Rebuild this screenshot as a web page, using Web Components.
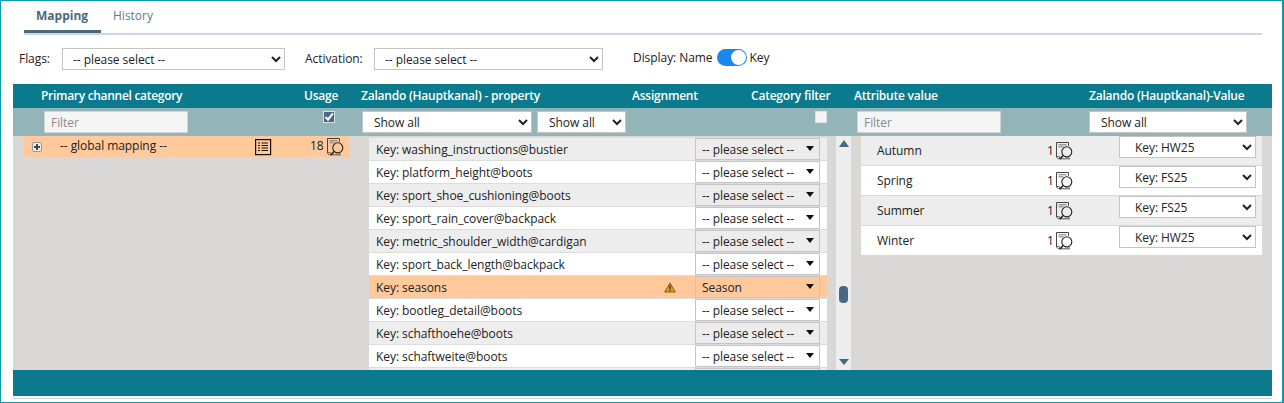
<!DOCTYPE html>
<html lang="en"><head><meta charset="utf-8"><title>Mapping</title>
<style>
html,body{margin:0;padding:0;background:#fff}
body{font:12px/16px "Open Sans","Noto Sans",sans-serif;color:#222;letter-spacing:-.06px}
</style></head><body>
<x-app>
  <x-tabs slot="tabs"></x-tabs>
  <x-toolbar slot="toolbar"></x-toolbar>
  <x-mapping slot="table"></x-mapping>
</x-app>
<script>
function def(name, css, html, init){
  customElements.define(name, class extends HTMLElement{
    connectedCallback(){
      if(this.shadowRoot) return;
      const r=this.attachShadow({mode:'open'});
      r.innerHTML='<style>'+css+'</style>'+(typeof html==='function'?html(this):html);
      if(init) init(r,this);
    }
  });
}
const att=(e,n,d='')=>e.hasAttribute(n)?e.getAttribute(n):d;

def('x-app',`:host{display:block;width:1284px;height:403px;box-sizing:border-box;border:1px solid #0a9aa8;border-width:1px 2px 1px 1px;overflow:hidden;background:#fff}
.w{display:flex;flex-direction:column;height:100%;padding:0 0 0 12px;box-sizing:border-box}
.rule{height:1px;background:#cdd6e2;margin-top:2px;width:1259px}`,
`<div class="w"><slot name="tabs"></slot><slot name="toolbar"></slot><slot name="table"></slot><div class="rule"></div></div>`);

def('x-tabs',`:host{display:flex;margin-left:11px;width:1238px;height:34px;box-sizing:border-box;border-bottom:2px solid #cdd6e2;align-items:stretch;letter-spacing:0}
a{display:block;box-sizing:border-box;height:33px;padding:7px 12px 0 12px;font-size:12px;line-height:16px;color:#5d7b8e;margin-bottom:-1px}
a.on{width:77px;font-weight:700;color:#49697f;border-bottom:3px solid #49697f;margin-bottom:0;height:32px}
`,`<a class="on">Mapping</a><a>History</a>`);

def('x-toolbar',`:host{display:flex;align-items:center;height:49px;box-sizing:border-box;padding:13px 0 14px 6px;font-size:12px}
.l{white-space:nowrap}
.f{width:43px;flex:none}.a{width:69px;flex:none;margin-left:20px}
.d{margin-left:30px;display:flex;align-items:center;margin-top:-3px}
.t{width:30px;height:17px;border-radius:9px;background:#1a86f0;margin:0 3px 0 4px;display:flex;justify-content:flex-end;align-items:center;padding-right:1px;box-sizing:border-box}
.t i{display:block;width:15px;height:15px;border-radius:50%;background:#fff}`,
`<span class="l f">Flags:</span><x-select w="223" pad="6" value="-- please select --"></x-select>
<span class="l a">Activation:</span><x-select w="229" pad="6" value="-- please select --"></x-select>
<div class="d"><span class="l">Display: Name</span><span class="t" role="switch" aria-checked="true"><i></i></span><span class="l">Key</span></div>`);

def('x-select',`:host{display:block;flex:none}
select{display:block;box-sizing:border-box;margin:0;font:inherit;letter-spacing:inherit;color:#222;background:#fff;border:1px solid #c4c4c4;border-radius:0;height:22px;padding:0 7px;outline:0;width:100%}
.tri{position:relative;display:block;height:22px}
.tri select{appearance:none;-webkit-appearance:none;padding:1px 0 0 6px}
.tri b{position:absolute;right:6px;top:8px;width:0;height:0;border:4px solid transparent;border-top:5px solid #111;border-bottom:0;pointer-events:none}
:host([tone=grey]) select{background:#ececec}
:host([tone=hl]) select{background:#ffc99b}`,
e=>{const s=`<select style="padding-left:${att(e,'pad',7)}px"><option selected>${att(e,'value')}</option></select>`;
 return att(e,'kind')==='tri'?`<span class="tri">${s.replace(/ style="[^"]*"/,'')}<b></b></span>`:s},
(r,e)=>{e.style.width=att(e,'w')+'px'});

def('x-filter',`:host{display:block;flex:none}
input{display:block;box-sizing:border-box;width:100%;height:22px;margin:0;border:1px solid #cfd3d3;background:#f5f5f5;padding:0 6px;font:inherit;letter-spacing:inherit;color:#222;outline:0}
input::placeholder{color:#8a8a8a;opacity:1}`,`<input placeholder="Filter">`,(r,e)=>{e.style.width=att(e,'w')+'px'});

def('x-check',`:host{display:block;flex:none;width:12px;height:12px;box-sizing:border-box;border:1px solid #d9e2e4;background:#f4f4f4}
:host([on]){background:#466a83}
svg{display:block}`,e=>e.hasAttribute('on')?`<svg width="10" height="10" viewBox="0 0 10 10"><path d="M1.5 5 L4 7.6 L8.8 1.4" fill="none" stroke="#fff" stroke-width="2"/></svg>`:'');

def('x-docsearch',`:host{display:block;flex:none;width:17px;height:18px}svg{display:block}`,
`<svg width="17" height="18" viewBox="0 0 17 18" fill="none">
<path d="M12.500 3.800V.5H.5V15l2.500 2.500" stroke="#444"/><path d="M2.500 2.800h8M2.500 4.800h5" stroke="#777"/>
<path d="M.8 14.500h2.700v2.500" stroke="#777"/><path d="M3.500 16.800h10.500" stroke="#555"/><path d="M9 15.300h5" stroke="#999"/>
<circle cx="10.800" cy="9.800" r="5" stroke="#222" stroke-width="1.100"/><path d="M7.200 13.500 3.800 17" stroke-width="1.600" stroke="#222"/></svg>`);

def('x-listicon',`:host{display:block;flex:none;width:17px;height:17px}svg{display:block}`,
`<svg width="17" height="17" viewBox="0 0 17 17" fill="none" stroke="#111"><rect x=".6" y=".6" width="15" height="15" stroke-width="1.200"/><path d="M3 4h2M6.500 4H13M3 6.500h2M6.500 6.500H13M3 9h2M6.500 9H13M3 11.500h2M6.500 11.500H13" stroke-width="1"/></svg>`);

def('x-tree-row',`:host{display:flex;align-items:center;height:21px;background:#ffc99b;box-sizing:border-box;padding:0 5px 0 9px;font-size:12px}
.p{width:10px;height:10px;flex:none;box-sizing:border-box;border:1px solid #9a9a9a;border-radius:2px;background:#e9e9e9;position:relative;margin-right:18px}
.p:before{content:"";position:absolute;left:1px;right:1px;top:3px;height:2px;background:#444}
.p:after{content:"";position:absolute;top:1px;bottom:1px;left:3px;width:2px;background:#444}
.t{width:195px;flex:none;margin-top:-2px}.n{margin-left:38px;margin-right:3px;width:14px;flex:none;margin-top:-2px}
x-listicon{margin-top:1px}`,
`<span class="p"></span><span class="t">-- global mapping --</span><x-listicon></x-listicon><span class="n">18</span><x-docsearch></x-docsearch>`);

def('x-prop-row',`:host{display:flex;height:23px;box-sizing:border-box;border-top:1px solid #dcdcdc;background:#fff;align-items:flex-start;padding-left:7px;font-size:12px;flex:none}
:host([alt]){background:#ededed}
:host([hl]){background:#ffc99b}
.t{flex:1;line-height:23px;white-space:nowrap;min-width:0}
.w{flex:none;width:12px;height:11px;margin:6px 19px 0 0}
x-select{margin-right:7px}
svg{display:block}`,
e=>`<span class="t"><slot></slot></span>${e.hasAttribute('warn')?`<span class="w"><svg width="12" height="11" viewBox="0 0 12 11"><path d="M6 1 11.300 10H.7Z" fill="#f7941d" stroke="#8a5a10" stroke-width="1"/><path d="M6 3.500v3.500M6 7.800v1.200" stroke="#222" stroke-width="1.200"/></svg></span>`:''}
<x-select kind="tri" w="125" value="${att(e,'value','-- please select --')}" tone="${e.hasAttribute('hl')?'hl':e.hasAttribute('alt')?'grey':''}"></x-select>`);

def('x-value-row',`:host{display:flex;height:29px;margin-bottom:1px;background:#fff;padding:0 6px 0 16px;font-size:12px;flex:none;align-items:flex-start}
:host([alt]){background:#ededed}
.t{width:170px;line-height:28px;margin-top:1px}
.n{width:9px;line-height:28px;margin-top:1px}
x-docsearch{margin-top:6px}
x-select{margin:0 0 0 46px}`,
e=>`<span class="t"><slot></slot></span><span class="n">1</span><x-docsearch></x-docsearch><x-select w="137" pad="11" value="${att(e,'value')}"></x-select>`);

def('x-scroll',`:host{display:flex;flex-direction:column;align-items:center;width:15px;background:#ededed;flex:none;box-sizing:border-box;padding-top:4px}
.u,.d{width:0;height:0;border:5px solid transparent}
.u{border-bottom:7px solid #466a83;border-top:0}
.d{border-top:6px solid #466a83;border-bottom:0}
.th{width:9px;height:17px;border-radius:4px;background:#466a83;margin:139px 0 56px}`,
`<i class="u"></i><i class="th"></i><i class="d"></i>`);

def('x-mapping',`:host{display:block;width:1259px;flex:none;font-size:12px}
.h{display:flex;height:24px;background:#0a7a8c;color:#fff;font-weight:600;line-height:24px;white-space:nowrap;letter-spacing:-.22px}
.h span{display:block;flex:none}
.fr{display:flex;height:28px;background:#93b5ba;padding-top:3px;box-sizing:border-box;align-items:flex-start}
.b{display:flex;height:234px;background:#d9d8d6;overflow:hidden}
.left{width:326px;margin-left:10px;flex:none}
.mid{width:458px;margin-left:20px;flex:none;height:234px;overflow:hidden;padding-top:1px;box-sizing:border-box;display:flex;flex-direction:column}
x-scroll{margin-left:9px}
.right{width:401px;margin-left:10px;flex:none;display:flex;flex-direction:column}
.foot{height:26px;background:#0a7a8c}`,
`<div class="h" role="row">
<span style="margin-left:28px;width:263px;letter-spacing:-.3px">Primary channel category</span><span style="width:57px">Usage</span><span style="width:271px">Zalando (Hauptkanal) - property</span><span style="width:119px">Assignment</span><span style="width:103px">Category filter</span><span style="width:235px">Attribute value</span><span>Zalando (Hauptkanal)-Value</span></div>
<div class="fr">
<x-filter w="144" style="margin-left:31px"></x-filter><x-check on style="margin-left:135px"></x-check>
<x-select w="170" value="Show all" style="margin-left:27px"></x-select><x-select w="89" value="Show all" style="margin-left:5px"></x-select>
<x-check style="margin-left:189px"></x-check><x-filter w="144" style="margin-left:30px"></x-filter><x-select w="158" value="Show all" style="margin-left:88px"></x-select></div>
<div class="b"><div class="left"><x-tree-row></x-tree-row></div>
<div class="mid">
<x-prop-row alt>Key: washing_instructions@bustier</x-prop-row>
<x-prop-row>Key: platform_height@boots</x-prop-row>
<x-prop-row alt>Key: sport_shoe_cushioning@boots</x-prop-row>
<x-prop-row>Key: sport_rain_cover@backpack</x-prop-row>
<x-prop-row alt>Key: metric_shoulder_width@cardigan</x-prop-row>
<x-prop-row>Key: sport_back_length@backpack</x-prop-row>
<x-prop-row hl warn value="Season">Key: seasons</x-prop-row>
<x-prop-row>Key: bootleg_detail@boots</x-prop-row>
<x-prop-row alt>Key: schafthoehe@boots</x-prop-row>
<x-prop-row>Key: schaftweite@boots</x-prop-row>
<x-prop-row alt> </x-prop-row>
</div>
<x-scroll></x-scroll>
<div class="right">
<x-value-row alt value="Key: HW25">Autumn</x-value-row>
<x-value-row value="Key: FS25">Spring</x-value-row>
<x-value-row alt value="Key: FS25">Summer</x-value-row>
<x-value-row value="Key: HW25">Winter</x-value-row>
</div></div>
<div class="foot"></div>`);
</script>
</body></html>
